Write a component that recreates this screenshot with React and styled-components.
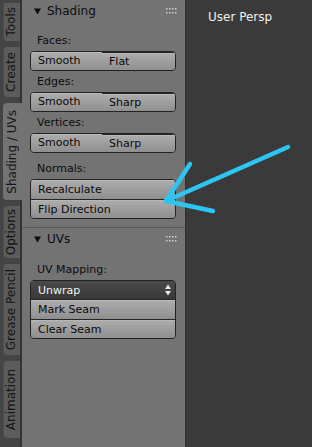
import React from "react";
import styled, { createGlobalStyle, css } from "styled-components";

const Global = createGlobalStyle`
  html, body { margin: 0; padding: 0; background: #3a3a3a; }
  body { font-family: "DejaVu Sans", "Liberation Sans", sans-serif; }
  * { box-sizing: border-box; }
`;

const Screen = styled.div`
  position: relative;
  display: flex;
  width: 312px;
  height: 447px;
  overflow: hidden;
  background: #3a3a3a;
`;

const TabColumn = styled.div`
  width: 22px;
  flex: none;
  display: flex;
  flex-direction: column;
  gap: 6px;
  padding-top: 3px;
  background: #444444;
  box-shadow: inset -2px 0 0 #333333;
`;

const Tab = styled.div`
  height: ${(p) => p.$h}px;
  width: ${(p) => (p.$active ? 19 : 17)}px;
  margin-left: 3px;
  border-radius: 4px 0 0 4px;
  background: ${(p) => (p.$active ? "#737373" : "#5c5c5c")};
  box-shadow: ${(p) => (p.$active ? "none" : "inset 1px 0 0 #4d4d4d")};
  display: flex;
  align-items: center;
  justify-content: center;
  ${(p) =>
    p.$first &&
    css`
      border-radius: 0 0 0 4px;
    `}
`;

const TabText = styled.span`
  writing-mode: vertical-rl;
  transform: rotate(180deg);
  font-size: 12px;
  color: #141414;
  white-space: nowrap;
  line-height: 17px;
`;

const Region = styled.div`
  width: 164px;
  flex: none;
  background: #737373;
  border-right: 1px solid #2f2f2f;
  display: flex;
  flex-direction: column;
`;

const Panel = styled.section`
  display: flex;
  flex-direction: column;
  ${(p) =>
    p.$separated &&
    css`
      border-top: 1px solid #5a5a5a;
    `}
`;

const Header = styled.div`
  height: 22px;
  display: flex;
  align-items: center;
  padding: 0 8px 0 12px;
  gap: 6px;
  font-size: 12px;
  color: #0c0c0c;
`;

const Grip = styled.svg`
  margin-left: auto;
  flex: none;
`;

const Body = styled.div`
  display: flex;
  flex-direction: column;
  padding: ${(p) => p.$top}px 9px 8px 8px;
`;

const Label = styled.div`
  height: 21px;
  line-height: 21px;
  padding-left: 7px;
  font-size: 11px;
  color: #0c0c0c;
`;

const Spacer = styled.div`
  height: 5px;
`;

const Row = styled.div`
  display: grid;
  grid-template-columns: 71px 1fr;
  height: 20px;
  border: 1px solid #222222;
  border-radius: 4px;
  overflow: hidden;
`;

const Stack = styled.div`
  display: flex;
  flex-direction: column;
  border: 1px solid #222222;
  border-radius: 4px;
  overflow: hidden;
`;

const Btn = styled.div`
  height: ${(p) => p.$h || 18}px;
  line-height: ${(p) => p.$h || 18}px;
  padding-left: 7px;
  font-size: 11px;
  color: #0a0a0a;
  white-space: nowrap;
  background: linear-gradient(#adadad, #8f8f8f);
  box-shadow: inset 0 1px 0 #b8b8b8;
  & + & {
    border-left: ${(p) => (p.$stacked ? "none" : "1px solid #262626")};
    border-top: ${(p) => (p.$stacked ? "1px solid #262626" : "none")};
  }
`;

const Dropdown = styled.div`
  height: 19px;
  display: flex;
  align-items: center;
  justify-content: space-between;
  padding: 0 4px 0 7px;
  font-size: 11px;
  color: #f2f2f2;
  background: linear-gradient(#4a4a4a, #383838);
  border-bottom: 1px solid #262626;
`;

const Viewport = styled.div`
  flex: 1;
  background: #3a3a3a;
  padding: 10px 0 0 22px;
`;

const ViewLabel = styled.div`
  font-size: 12px;
  line-height: 14px;
  color: #efefef;
`;

const Overlay = styled.svg`
  position: absolute;
  left: 0;
  top: 0;
  pointer-events: none;
`;

const Triangle = () => (
  <svg width="7" height="7" viewBox="0 0 7 7">
    <polygon points="0,0.5 7,0.5 3.5,6.5" fill="#0c0c0c" />
  </svg>
);

const GripDots = () => (
  <Grip width="11" height="7" viewBox="0 0 11 7">
    {[0, 3, 6, 9].map((x) =>
      [0, 4].map((y) => (
        <rect key={`${x}-${y}`} x={x} y={y} width="1.5" height="1.5" fill="#d0d0d0" />
      ))
    )}
  </Grip>
);

const UpDown = () => (
  <svg width="6" height="12" viewBox="0 0 6 12">
    <polygon points="3,0.5 6,5 0,5" fill="#e8e8e8" />
    <polygon points="0,7 6,7 3,11.5" fill="#e8e8e8" />
  </svg>
);

const tabs = [
  { t: "Tools", h: 38 },
  { t: "Create", h: 50 },
  { t: "Shading / UVs", h: 97, active: true },
  { t: "Options", h: 52 },
  { t: "Grease Pencil", h: 91 },
  { t: "Animation", h: 77 },
];

const Pair = ({ a, b }) => (
  <Row>
    <Btn>{a}</Btn>
    <Btn>{b}</Btn>
  </Row>
);

export default function App() {
  return (
    <>
      <Global />
      <Screen>
        <TabColumn>
          {tabs.map((tab, i) => (
            <Tab key={tab.t} $h={tab.h} $active={tab.active} $first={i === 0}>
              <TabText>{tab.t}</TabText>
            </Tab>
          ))}
        </TabColumn>
        <Region>
          <Panel>
            <Header>
              <Triangle />
              <span>Shading</span>
              <GripDots />
            </Header>
            <Body $top={8}>
              <Label>Faces:</Label>
              <Pair a="Smooth" b="Flat" />
              <Label>Edges:</Label>
              <Pair a="Smooth" b="Sharp" />
              <Label>Vertices:</Label>
              <Pair a="Smooth" b="Sharp" />
              <Spacer />
              <Label>Normals:</Label>
              <Stack>
                <Btn $stacked $h={19}>Recalculate</Btn>
                <Btn $stacked $h={19}>Flip Direction</Btn>
              </Stack>
            </Body>
          </Panel>
          <Panel $separated>
            <Header>
              <Triangle />
              <span>UVs</span>
              <GripDots />
            </Header>
            <Body $top={9}>
              <Label>UV Mapping:</Label>
              <Stack>
                <Dropdown>
                  <span>Unwrap</span>
                  <UpDown />
                </Dropdown>
                <Btn $stacked $h={19}>Mark Seam</Btn>
                <Btn $stacked $h={19}>Clear Seam</Btn>
              </Stack>
            </Body>
          </Panel>
        </Region>
        <Viewport>
          <ViewLabel>User Persp</ViewLabel>
        </Viewport>
        <Overlay width="312" height="447" viewBox="0 0 312 447">
          <g stroke="#2cc6f5" strokeWidth="4.5" strokeLinecap="round" fill="none">
            <line x1="288" y1="147" x2="166" y2="201" />
            <line x1="166" y1="201" x2="190" y2="164" />
            <line x1="166" y1="201" x2="213" y2="211" />
          </g>
        </Overlay>
      </Screen>
    </>
  );
}
